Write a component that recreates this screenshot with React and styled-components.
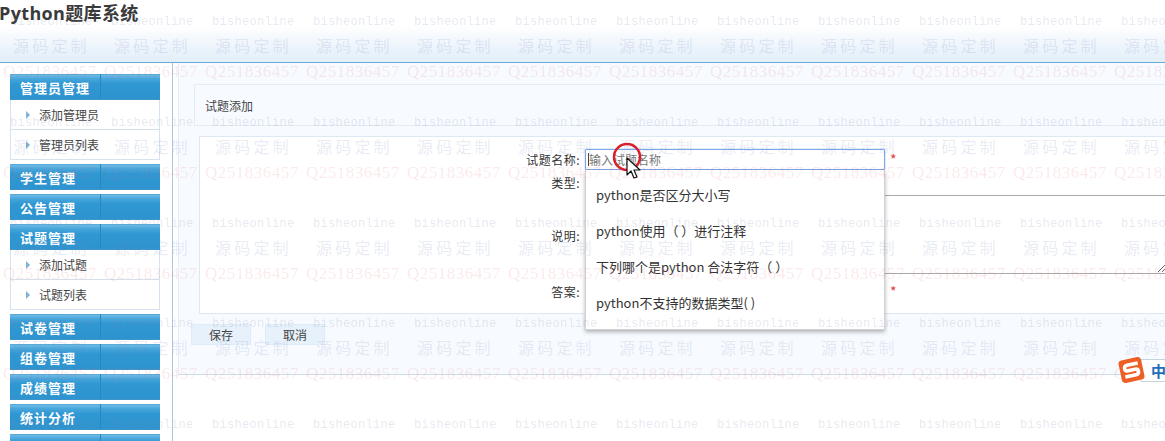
import React from 'react';
import styled, { createGlobalStyle } from 'styled-components';

const GlobalStyle = createGlobalStyle`
  html, body {
    margin: 0;
    padding: 0;
    background: #fff;
    overflow: hidden;
  }
  body {
    font-family: "Noto Sans CJK SC", "Liberation Sans", sans-serif;
    font-size: 12px;
    color: #333;
  }
`;

const Page = styled.div`
  position: relative;
  width: 1165px;
  height: 441px;
  overflow: hidden;
`;

const Header = styled.header`
  height: 62px;
  border-bottom: 1px solid #6ba9d6;
  background: linear-gradient(180deg, #fff 26px, #eaf3fb 50px, #e2eff9 62px);
`;

const Title = styled.h1`
  margin: 0 0 0 -1px;
  font-family: "Open Sans", "Noto Sans CJK SC", sans-serif;
  font-size: 18px;
  font-weight: 700;
  line-height: 26px;
  color: #3a3a3a;
  letter-spacing: 0.35px;
`;

const Body = styled.div`
  display: flex;
  height: 378px;
`;

const Sidebar = styled.aside`
  flex: 0 0 173px;
  box-sizing: border-box;
  height: 100%;
  padding: 11px 0 0 10px;
  border-right: 1px solid #a9c6de;
  overflow: hidden;
`;

const MenuGroup = styled.div`
  width: 150px;
  margin-bottom: 4px;
`;

const MenuHead = styled.div`
  box-sizing: border-box;
  height: 26px;
  padding-left: 10px;
  border-bottom: 1px solid #3f94c8;
  background:
    linear-gradient(#2b86bb, #2b86bb) 90px 0 / 1px 100% no-repeat,
    linear-gradient(180deg, #4a97c6 0, #6cbce6 1px, #46a5da 5px, #2f97d2 10px, #2d94cf 100%);
  color: #fff;
  font-size: 13px;
  font-weight: 700;
  line-height: 28px;
  letter-spacing: 1px;
`;

const MenuList = styled.ul`
  box-sizing: border-box;
  height: 60px;
  margin: 0;
  padding: 0;
  list-style: none;
  border: 1px solid #d5e3f0;
  border-top: 0;
`;

const MenuItem = styled.li`
  box-sizing: border-box;
  display: flex;
  align-items: center;
  height: 30px;
  padding-left: 15px;
  border-bottom: 1px solid #d5dfe9;
  color: #444;
  line-height: 30px;

  &:last-child {
    height: 29px;
    border-bottom: 0;
  }

  &::before {
    content: '';
    margin-right: 9px;
    border-left: 4px solid #7fb2d6;
    border-top: 4px solid transparent;
    border-bottom: 4px solid transparent;
  }
`;

const Main = styled.main`
  flex: 0 0 987px;
  margin-left: 5px;
  height: 312px;
  padding: 21px 0 0 15px;
  box-sizing: border-box;
  border-left: 1px solid #e3edf7;
  border-bottom: 1px solid #cfdbe7;
  background: #f7fbff;
`;

const PanelTitle = styled.div`
  box-sizing: border-box;
  width: 1100px;
  height: 42px;
  padding-left: 10px;
  border: 1px solid #e2edf7;
  line-height: 42px;
  color: #444;
`;

const FormBox = styled.form`
  box-sizing: border-box;
  width: 1100px;
  height: 178px;
  margin: 10px 0 10px 5px;
  padding-top: 12px;
  border: 1px solid #dde8f3;
  background: #fff;
`;

const FormRow = styled.div`
  display: flex;
  align-items: ${p => (p.$top ? 'flex-start' : 'center')};
  height: ${p => p.$height}px;
  margin-bottom: ${p => p.$gap || 0}px;
`;

const Label = styled.label`
  flex: 0 0 385px;
  text-align: right;
  padding-right: 5px;
  box-sizing: border-box;
  color: #333;
  line-height: 18px;
  letter-spacing: 0.5px;
  margin-top: ${p => p.$offset || 0}px;
`;

const Combo = styled.div`
  position: relative;
  width: 300px;
  height: 21px;
`;

const NameInput = styled.input`
  box-sizing: border-box;
  width: 300px;
  height: 21px;
  padding: 0 3px;
  border: 1px solid #7da6e8;
  border-radius: 1px;
  box-shadow: 0 0 2px #9dbdf0;
  outline: 0;
  background: transparent;
  font: 12px "Noto Sans CJK SC", sans-serif;

  &::placeholder {
    color: #777;
  }
`;

const Caret = styled.span`
  position: absolute;
  left: 3px;
  top: 4px;
  width: 1px;
  height: 13px;
  background: #444;
`;

const Suggestions = styled.ul`
  position: absolute;
  z-index: 2;
  top: 21px;
  left: 0;
  width: 300px;
  height: 160px;
  box-sizing: border-box;
  margin: 0;
  padding: 7px 0 0;
  list-style: none;
  background: #fff;
  border: 1px solid #d2d2d2;
  border-top: 0;
  box-shadow: 0 2px 4px rgba(0, 0, 0, 0.3);
`;

const Suggestion = styled.li`
  height: 36px;
  padding-left: 10px;
  font-size: 13px;
  line-height: 36px;
  color: #333;
`;

const Required = styled.span`
  margin: -2px 0 0 5px;
  color: #e43a3a;
  font-size: 14px;
  line-height: 14px;
`;

const Notes = styled.textarea`
  display: block;
  box-sizing: border-box;
  flex: 0 0 582px;
  height: 79px;
  margin: 0;
  border: 1px solid #aaa;
  background: transparent;
`;

const Actions = styled.div`
  display: flex;
  gap: 14px;
  margin-left: -3px;
`;

const Button = styled.button`
  box-sizing: border-box;
  width: 60px;
  height: 21px;
  padding: 0;
  border: 1px solid #dfebf7;
  background: #e6f1fb;
  color: #444;
  font: 12px "Noto Sans CJK SC", sans-serif;
`;

const Watermark = styled.div`
  position: absolute;
  z-index: 5;
  inset: 0;
  pointer-events: none;
  overflow: hidden;
  display: grid;
  grid-template-columns: repeat(12, 101px);
  grid-auto-rows: 100.8px;
  padding-top: 14px;
`;

const Tile = styled.div`
  display: flex;
  flex-direction: column;
  white-space: nowrap;
`;

const MarkSite = styled.span`
  margin-left: 10px;
  font-family: "Liberation Mono", monospace;
  font-size: 12px;
  line-height: 16px;
  letter-spacing: 0.3px;
  color: rgba(130, 135, 175, 0.2);
`;

const MarkCustom = styled.span`
  margin: 5px 0 0 13px;
  font-size: 16px;
  line-height: 20px;
  letter-spacing: 3.2px;
  color: rgba(120, 135, 190, 0.18);
`;

const MarkQq = styled.span`
  margin: 8px 0 0 3px;
  font-family: "Liberation Serif", serif;
  font-size: 17px;
  line-height: 18px;
  letter-spacing: 0.5px;
  color: rgba(225, 90, 110, 0.14);
`;

const ClickMark = styled.svg`
  position: absolute;
  z-index: 6;
  left: 610px;
  top: 140px;
`;

const ImeBar = styled.div`
  position: absolute;
  z-index: 6;
  left: 1117px;
  top: 356px;
  width: 70px;
  height: 28px;
  display: flex;
  align-items: center;
`;

const ImeLogo = styled.svg`
  position: relative;
  z-index: 1;
  flex: 0 0 29px;
`;

const ImeLabel = styled.div`
  box-sizing: border-box;
  flex: 0 0 40px;
  margin-left: -6px;
  height: 23px;
  padding-left: 10px;
  border: 1px solid #c4d3e0;
  border-radius: 2px;
  background: #fff;
  color: #1c6fb8;
  font-size: 15px;
  font-weight: 700;
  line-height: 21px;
`;

const adminItems = ['添加管理员', '管理员列表'];
const questionItems = ['添加试题', '试题列表'];

// the last head is cut off by the window, its label is below the fold
const menu = [
  { title: '管理员管理', items: adminItems },
  { title: '学生管理' },
  { title: '公告管理' },
  { title: '试题管理', items: questionItems },
  { title: '试卷管理' },
  { title: '组卷管理' },
  { title: '成绩管理' },
  { title: '统计分析' },
  { title: '' },
];

const suggestions = [
  'python是否区分大小写',
  'python使用（ ）进行注释',
  '下列哪个是python 合法字符（ ）',
  'python不支持的数据类型( )',
];

export default function App() {
  return (
    <Page>
      <GlobalStyle />
      <Header>
        <Title>Python题库系统</Title>
      </Header>
      <Body>
        <Sidebar>
          {menu.map(group => (
            <MenuGroup key={group.title}>
              <MenuHead>{group.title}</MenuHead>
              {group.items && (
                <MenuList>
                  {group.items.map(item => (
                    <MenuItem key={item}>{item}</MenuItem>
                  ))}
                </MenuList>
              )}
            </MenuGroup>
          ))}
        </Sidebar>
        <Main>
          <PanelTitle>试题添加</PanelTitle>
          <FormBox>
            <FormRow $height={21} $gap={4}>
              <Label>试题名称:</Label>
              <Combo>
                <NameInput placeholder="输入试题名称" />
                <Caret />
                <Suggestions>
                  {suggestions.map(text => (
                    <Suggestion key={text}>{text}</Suggestion>
                  ))}
                </Suggestions>
              </Combo>
              <Required>*</Required>
            </FormRow>
            <FormRow $height={21}>
              <Label $offset={-3}>类型:</Label>
            </FormRow>
            <FormRow $height={78} $gap={8} $top>
              <Label $offset={32}>说明:</Label>
              <Notes />
            </FormRow>
            <FormRow $height={21}>
              <Label>答案:</Label>
              <Combo />
              <Required>*</Required>
            </FormRow>
          </FormBox>
          <Actions>
            <Button type="button">保存</Button>
            <Button type="button">取消</Button>
          </Actions>
        </Main>
      </Body>
      <Watermark>
        {Array.from({ length: 60 }, (_, i) => (
          <Tile key={i}>
            <MarkSite>bisheonline</MarkSite>
            <MarkCustom>源码定制</MarkCustom>
            <MarkQq>Q251836457</MarkQq>
          </Tile>
        ))}
      </Watermark>
      <ClickMark width="34" height="40" viewBox="0 0 34 40">
        <circle cx="17" cy="17" r="13" fill="none" stroke="#d8202c" strokeWidth="2.5" />
        <path d="M17 18v17l4-4 3 7 3-1-3-7h6z" fill="#fff" stroke="#111" strokeWidth="1.2" strokeLinejoin="round" />
      </ClickMark>
      <ImeBar>
        <ImeLogo width="29" height="28" viewBox="0 0 29 28">
          <g transform="rotate(-12 14.5 14)">
            <rect x="3" y="2.5" width="23" height="23" rx="3.5" fill="#ee5f26" />
            <path d="M22 8.5H11Q8 8.5 8 11.5Q8 14 11 14H18Q21 14 21 16.5Q21 19.5 18 19.5H7" fill="none" stroke="#fff" strokeWidth="3.6" />
          </g>
        </ImeLogo>
        <ImeLabel>中</ImeLabel>
      </ImeBar>
    </Page>
  );
}
